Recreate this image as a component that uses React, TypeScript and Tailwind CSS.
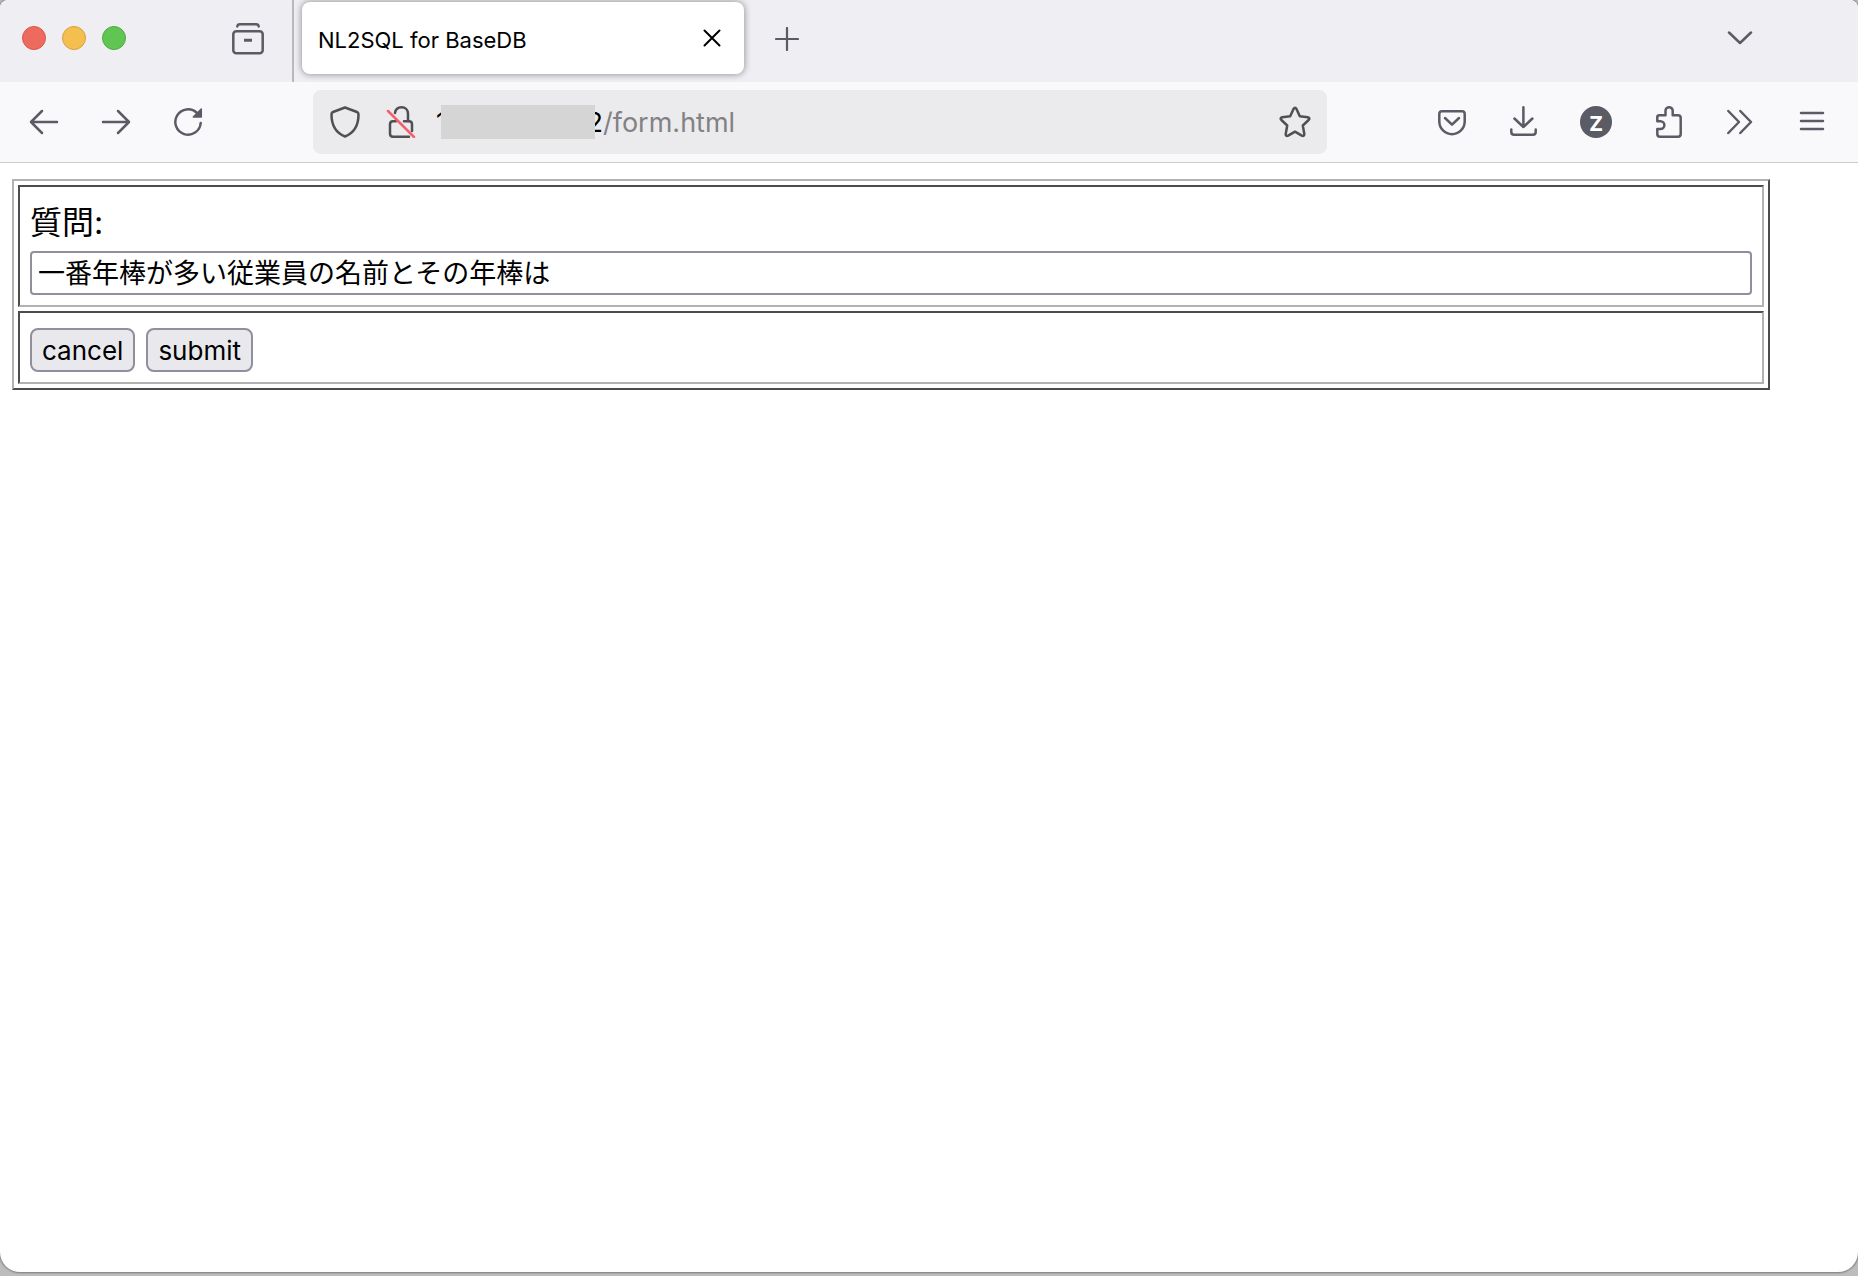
import type { ReactNode } from 'react';

type IconProps = { width?: number; height?: number; children: ReactNode };

// Every icon is drawn in its own pixel box with the same stroke
function Icon({ width = 32, height = 32, children }: IconProps) {
  return (
    <svg
      width={width}
      height={height}
      viewBox={`0 0 ${width} ${height}`}
      fill="none"
      stroke="currentColor"
      strokeWidth="2.5"
      strokeLinecap="round"
      strokeLinejoin="round"
      aria-hidden="true"
    >
      {children}
    </svg>
  );
}

function IconButton({ label, children }: { label: string; children: ReactNode }) {
  return (
    <button type="button" aria-label={label} className="flex size-8 shrink-0 items-center justify-center">
      {children}
    </button>
  );
}

function TabBar() {
  return (
    <header className="flex h-[82px] items-start bg-[#efeef3] text-[#5b5b66]">
      <div className="ml-[22px] flex h-[76px] items-center gap-4">
        <button type="button" aria-label="Close window" className="size-6 rounded-full border border-[#d8574b] bg-[#ed6a5e]" />
        <button type="button" aria-label="Minimize window" className="size-6 rounded-full border border-[#d9a03c] bg-[#f5bf4f]" />
        <button type="button" aria-label="Zoom window" className="size-6 rounded-full border border-[#4fab3d] bg-[#61c554]" />
      </div>
      <div className="ml-[106px] flex h-[78px] items-center">
        <IconButton label="View recent browsing">
          <Icon>
            <rect x="1.3" y="8.3" width="29.4" height="22" rx="3" />
            <path d="M5.3 3.5 Q5.5 1.3 8 1.3 H24 Q26.5 1.3 26.7 3.5" />
            <path d="M12 17.200 H20" strokeWidth="3" strokeLinecap="butt" />
          </Icon>
        </IconButton>
      </div>
      <div className="ml-7 h-full w-[2px] bg-[#b9b8bd]" />
      <div className="mt-[2px] ml-2 flex h-[72px] w-[442px] items-center justify-between rounded-lg bg-white px-4 text-black shadow-[0_0_6px_1px_rgba(0,0,0,0.35)]">
        <span className="pt-1 text-[22px] leading-8">NL2SQL for BaseDB</span>
        <IconButton label="Close tab">
          <Icon width={18} height={18}>
            <path d="M1.5 1.5 L16.5 16.5 M16.5 1.5 L1.5 16.5" strokeWidth="2" />
          </Icon>
        </IconButton>
      </div>
      <div className="ml-[27px] flex h-[78px] items-center">
        <IconButton label="New tab">
          <Icon width={24} height={24}>
            <path d="M12 1 V23 M1 12 H23" strokeWidth="2.2" />
          </Icon>
        </IconButton>
      </div>
      <div className="mr-[102px] ml-auto flex h-[76px] items-center">
        <IconButton label="List all tabs">
          <Icon width={26} height={14}>
            <path d="M2 1.5 L13 12 L24 1.5" />
          </Icon>
        </IconButton>
      </div>
    </header>
  );
}

function AddressBar() {
  return (
    <div className="ml-[109px] flex h-16 min-w-0 flex-1 items-center rounded-lg bg-[#ebebed] px-4 text-[#505054]">
      <IconButton label="Tracking protection">
        <Icon width={30}>
          <path d="M15 1.5 L27 6 Q28.5 6.6 28.5 8.5 C28.5 18 25 26.5 15 30.5 C5 26.5 1.5 18 1.5 8.5 Q1.5 6.6 3 6 Z" />
        </Icon>
      </IconButton>
      <div className="ml-6 flex">
        <IconButton label="Connection is not secure">
          <Icon>
            <path d="M10 7 C10.5 3.5 13 1.3 16.500 1.3 C20.5 1.3 23 4 23 8 V15" />
            <path d="M11 15.3 H8 Q5 15.3 5 18.3 V27.7 Q5 30.7 8 30.7 H24" />
            <path d="M19 15.3 H24 Q27 15.3 27 18.3 V25" />
            <path d="M3 5 L29 31" stroke="#f06070" />
          </Icon>
        </IconButton>
      </div>
      <div className="ml-4 flex min-w-0 flex-1 items-center text-[27px] leading-8">
        <span className="relative flex w-[170px] shrink-0 justify-between pt-[2px] pl-[3px] text-black">
          <span>1</span>
          <span>2</span>
          {/* Hides the host address */}
          <span className="absolute inset-y-0 right-2 left-2 bg-[#d5d5d5]" />
        </span>
        <span className="pt-[2px] text-[#828285]">/form.html</span>
      </div>
      <IconButton label="Bookmark this page">
        <Icon>
          <path d="M14.5 3 Q16 0.5 17.5 3 L20.8 10.3 L28.8 11.3 Q31.5 12 29.6 14 L23.8 19.5 L25.3 28 Q25.3 30.7 22.8 29.7 L16 25.7 L9.2 29.7 Q6.7 30.7 6.7 28 L8.2 19.5 L2.4 14 Q0.5 12 3.2 11.3 L11.2 10.3 Z" />
        </Icon>
      </IconButton>
    </div>
  );
}

function Toolbar() {
  return (
    <nav className="flex h-[81px] items-center border-b border-[#cccccf] bg-[#f9f9fb] pr-[30px] pl-7 text-[#5b5b66]">
      <div className="flex gap-10">
        <IconButton label="Back">
          <Icon width={30} height={26}>
            <path d="M28 13 H2 M13 2 L2 13 L13 24" />
          </Icon>
        </IconButton>
        <IconButton label="Forward">
          <Icon width={30} height={26}>
            <path d="M2 13 H28 M17 2 L28 13 L17 24" />
          </Icon>
        </IconButton>
        <IconButton label="Reload">
          <Icon width={30} height={30}>
            <path d="M27.7 16 A12.7 12.7 0 1 1 24 6" />
            <path d="M28.3 2 V10 H20.300 Z" fill="currentColor" strokeWidth="1.5" />
          </Icon>
        </IconButton>
      </div>
      <AddressBar />
      <div className="ml-[109px] flex gap-10">
        <IconButton label="Save to Pocket">
          <Icon>
            <path d="M6 5.3 H26 Q28.7 5.3 28.7 8 V15.500 A12.7 12.7 0 0 1 3.3 15.500 V8 Q3.3 5.3 6 5.3 Z" />
            <path d="M9 12 L16 18.7 L23 12" />
          </Icon>
        </IconButton>
        <IconButton label="Downloads">
          <Icon>
            <path d="M15.4 1.3 V21 M6.4 12.500 L15.4 21 L24.4 12.500" />
            <path d="M3.3 23.500 V26 Q3.3 28.7 6 28.7 H25 Q27.7 28.7 27.7 26 V23.500" />
          </Icon>
        </IconButton>
        <button
          type="button"
          aria-label="Account"
          className="flex size-8 items-center justify-center rounded-full bg-[#5b5b66] font-['Noto_Sans',sans-serif] text-[22px] leading-8 font-bold text-white"
        >
          Z
        </button>
        <IconButton label="Extensions">
          <Icon>
            <path d="M7.3 9.3 H13.500 V4.8 A3.600 3.600 0 0 1 20.700 4.800 V9.3 H26 Q28.7 9.3 28.7 12 V28 Q28.7 30.7 26 30.7 H8 Q5.3 30.7 5.3 28 V23 H8.500 A3.900 3.900 0 0 0 8.500 15.200 H5.3 V11.300 Q5.3 9.3 7.3 9.3 Z" />
          </Icon>
        </IconButton>
        <IconButton label="More tools">
          <Icon>
            <path d="M4.3 5 L15 16 L4.3 27 M16.300 5 L27 16 L16.300 27" />
          </Icon>
        </IconButton>
        <IconButton label="Menu">
          <Icon>
            <path d="M5 7 H27 M5 15 H27 M5 23 H27" />
          </Icon>
        </IconButton>
      </div>
    </nav>
  );
}

function QuestionForm() {
  const cell =
    'border-2 border-t-[#4c4c4c] border-r-[#b2b2b2] border-b-[#b2b2b2] border-l-[#4c4c4c] p-[10px] text-left font-normal';
  const button = 'h-11 rounded-lg border-2 border-[#8f8f9d] bg-[#e9e9ed] px-[10px] pt-[2px] text-[26px] leading-8';

  return (
    <main className="flex-1 pt-4 pr-[88px] pl-3">
      <form onSubmit={(e) => e.preventDefault()}>
        <table className="w-full border-separate border-spacing-1 border-2 border-t-[#b2b2b2] border-r-[#4c4c4c] border-b-[#4c4c4c] border-l-[#b2b2b2]">
          <tbody>
            <tr>
              <td className={cell}>
                <label htmlFor="question" className="block pt-[6px] pb-2 text-[32px] leading-10">
                  質問:
                </label>
                <input
                  id="question"
                  type="text"
                  defaultValue="一番年棒が多い従業員の名前とその年棒は"
                  className="block h-11 w-full rounded border-2 border-[#8f8f9d] bg-white px-[6px] pb-[3px] text-[27px] leading-8"
                />
              </td>
            </tr>
            <tr>
              <td className={cell}>
                <div className="flex gap-[11px] pt-[5px]">
                  <button type="reset" className={button}>
                    cancel
                  </button>
                  <button type="submit" className={button}>
                    submit
                  </button>
                </div>
              </td>
            </tr>
          </tbody>
        </table>
      </form>
    </main>
  );
}

export default function App() {
  return (
    <div className="flex min-h-screen flex-col bg-[#bdbdbd] pb-1 font-[Inter,'Noto_Sans_CJK_JP',sans-serif] text-black">
      <div className="flex flex-1 flex-col overflow-hidden rounded-t-lg rounded-b-[20px] bg-white shadow-[0_0_2px_1px_rgba(0,0,0,0.35)]">
        <TabBar />
        <Toolbar />
        <QuestionForm />
      </div>
    </div>
  );
}
